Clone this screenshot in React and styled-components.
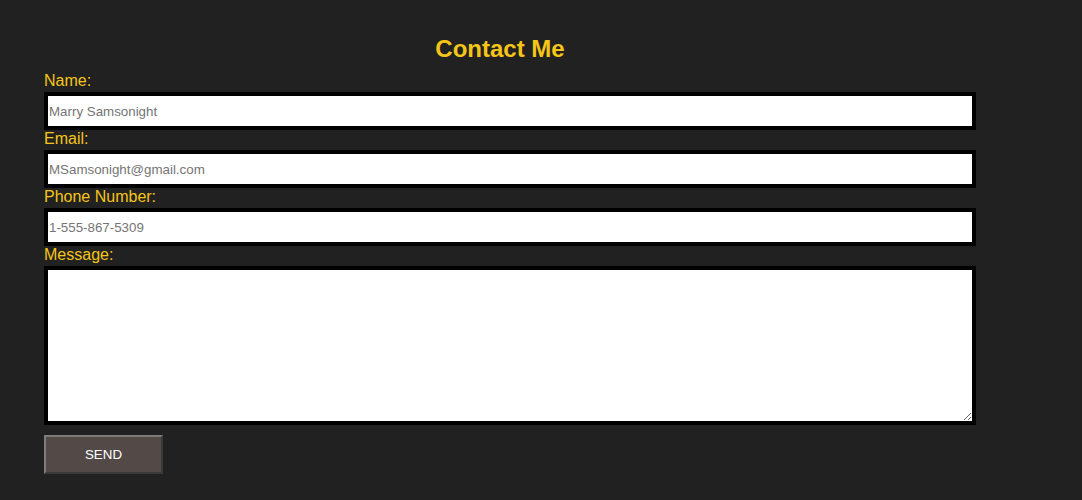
import React from 'react'
import styled, { createGlobalStyle } from 'styled-components'

const GlobalStyle = createGlobalStyle`
  html, body {
    margin: 0;
    background-color: #212121;
    font-family: "Liberation Sans", Arial, sans-serif;
  }
`

const Page = styled.div`
  min-height: 500px;
  padding: 35px 0 0 44px;
  box-sizing: border-box;
`

const Form = styled.form`
  width: 932px;
  display: flex;
  flex-direction: column;
`

const Title = styled.h2`
  margin: 0 20px 9px 0;
  font-size: 24px;
  line-height: 28px;
  font-weight: bold;
  text-align: center;
  color: #f5c518;
`

const Label = styled.label`
  display: block;
  font-size: 16px;
  line-height: 18px;
  color: #f5c518;
`

const Input = styled.input`
  display: block;
  box-sizing: border-box;
  width: 100%;
  height: 38px;
  margin: 2px 0 0;
  padding: 0 1px;
  border: 4px solid #000;
  background: #fff;
  font-family: "Liberation Sans", Arial, sans-serif;
  font-size: 13.33px;
  color: #333;
  outline: none;

  &::placeholder {
    color: #757575;
  }
`

const TextArea = styled.textarea`
  display: block;
  box-sizing: border-box;
  width: 100%;
  height: 159px;
  margin: 2px 0 0;
  padding: 2px;
  border: 4px solid #000;
  background: #fff;
  font-family: "Liberation Sans", Arial, sans-serif;
  font-size: 13.33px;
  outline: none;
`

const SendButton = styled.button`
  width: 119px;
  height: 39px;
  margin-top: 10px;
  border-style: solid;
  border-width: 2px;
  border-color: #7e7b7a #3a3838 #3a3838 #7e7b7a;
  background-color: #534a48;
  color: #fff;
  font-family: "Liberation Sans", Arial, sans-serif;
  font-size: 13.33px;
  cursor: pointer;
`

const fields = [
  { id: 'name', label: 'Name:', type: 'text', placeholder: 'Marry Samsonight' },
  { id: 'email', label: 'Email:', type: 'email', placeholder: 'MSamsonight@gmail.com' },
  { id: 'phone', label: 'Phone Number:', type: 'tel', placeholder: '1-555-867-5309' },
]

function App() {
  return (
    <Page>
      <GlobalStyle />
      <Form onSubmit={e => e.preventDefault()}>
        <Title>Contact Me</Title>
        {fields.map(f => (
          <div key={f.id}>
            <Label htmlFor={f.id}>{f.label}</Label>
            <Input id={f.id} type={f.type} placeholder={f.placeholder} />
          </div>
        ))}
        <div>
          <Label htmlFor='message'>Message:</Label>
          <TextArea id='message' />
        </div>
        <div>
          <SendButton type='submit'>SEND</SendButton>
        </div>
      </Form>
    </Page>
  )
}

export default App
